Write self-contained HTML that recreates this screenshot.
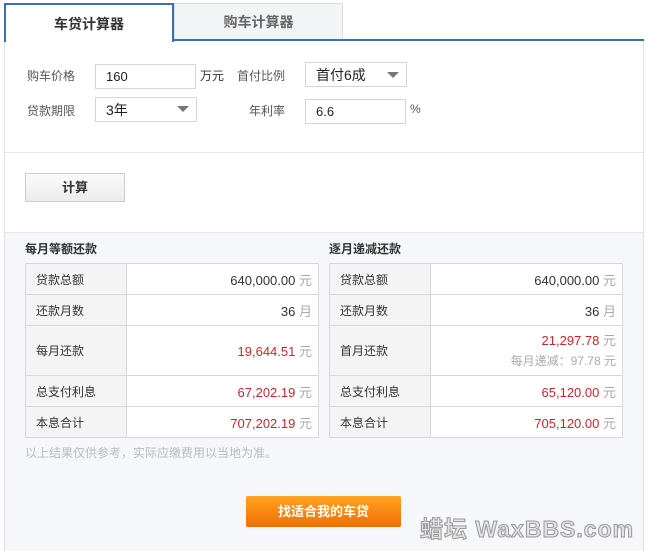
<!DOCTYPE html>
<html><head><meta charset="utf-8"><style>
*{margin:0;padding:0;box-sizing:border-box}
body{width:648px;height:551px;background:#fff;font-family:"Liberation Sans","Noto Sans CJK SC",sans-serif;font-size:12px;color:#333;position:relative;overflow:hidden}
.a{position:absolute}
.inp{position:absolute;border:1px solid #d5d5d5;background:#fff;font-size:13px;color:#222;padding-left:10px;line-height:24px;height:25px}
.tri{position:absolute;width:0;height:0;border-left:6px solid transparent;border-right:6px solid transparent;border-top:6px solid #777}
table{position:absolute;border-collapse:collapse;font-size:12px}
td{border:1px solid #d8d8d8;height:31px}
td.l{background:#f4f4f4;width:101px;padding-left:10px;color:#333}
td.r{background:#fff;text-align:right;padding-right:6px;font-size:13px;color:#333}
.u{color:#aaa}
.red{color:#c4282c}
</style></head><body>
<div class="a" style="left:4px;top:40px;width:640px;height:511px;border-left:1px solid #dde2e8;border-right:1px solid #dde2e8"></div>
<div class="a" style="left:173px;top:39px;width:471px;height:2px;background:#3f6eae"></div>
<div class="a" style="left:4px;top:3px;width:170px;height:39px;background:#fff;border:2px solid #3f6eae;border-bottom:none;text-align:center;line-height:38px;font-size:14px;font-weight:bold;color:#333">车贷计算器</div>
<div class="a" style="left:174px;top:3px;width:169px;height:36px;background:#f2f4f6;border:1px solid #d8dde2;border-bottom:none;text-align:center;line-height:36px;font-size:14px;font-weight:bold;color:#666">购车计算器</div>
<div class="a" style="left:27px;top:67px;color:#555">购车价格</div>
<div class="inp" style="left:95px;top:64px;width:101px">160</div>
<div class="a" style="left:200px;top:67px;color:#333">万元</div>
<div class="a" style="left:237px;top:67px;color:#555">首付比例</div>
<div class="inp" style="left:305px;top:62px;width:102px;font-size:14px">首付6成</div>
<div class="tri" style="left:387px;top:72px"></div>
<div class="a" style="left:27px;top:102px;color:#555">贷款期限</div>
<div class="inp" style="left:95px;top:97px;width:102px;font-size:14px">3年</div>
<div class="tri" style="left:177px;top:106px"></div>
<div class="a" style="left:249px;top:102px;color:#555">年利率</div>
<div class="inp" style="left:305px;top:99px;width:101px">6.6</div>
<div class="a" style="left:410px;top:102px;color:#555">%</div>
<div class="a" style="left:5px;top:152px;width:638px;height:1px;background:#e6e6e6"></div>
<div class="a" style="left:25px;top:173px;width:100px;height:29px;border:1px solid #ccc;background:linear-gradient(#fafafa,#ececec);text-align:center;line-height:27px;font-weight:bold;font-size:13px">计算</div>
<div class="a" style="left:5px;top:232px;width:638px;height:319px;background:#f5f7fa;border-top:1px solid #e6e6e6"></div>
<div class="a" style="left:25px;top:240px;font-weight:bold;font-size:12px">每月等额还款</div>
<div class="a" style="left:329px;top:240px;font-weight:bold;font-size:12px">逐月递减还款</div>
<table style="left:25px;top:263px;width:294px">
<tr><td class="l">贷款总额</td><td class="r">640,000.00 <span class="u">元</span></td></tr>
<tr><td class="l">还款月数</td><td class="r">36 <span class="u">月</span></td></tr>
<tr><td class="l" style="height:50px">每月还款</td><td class="r"><span class="red">19,644.51</span> <span class="u">元</span></td></tr>
<tr><td class="l">总支付利息</td><td class="r"><span class="red">67,202.19</span> <span class="u">元</span></td></tr>
<tr><td class="l">本息合计</td><td class="r"><span class="red">707,202.19</span> <span class="u">元</span></td></tr>
</table>
<table style="left:329px;top:263px;width:294px">
<tr><td class="l">贷款总额</td><td class="r">640,000.00 <span class="u">元</span></td></tr>
<tr><td class="l">还款月数</td><td class="r">36 <span class="u">月</span></td></tr>
<tr><td class="l" style="height:50px">首月还款</td><td class="r" style="line-height:20px"><span class="red">21,297.78</span> <span class="u">元</span><br><span class="u" style="font-size:12px">每月递减：97.78 元</span></td></tr>
<tr><td class="l">总支付利息</td><td class="r"><span class="red">65,120.00</span> <span class="u">元</span></td></tr>
<tr><td class="l">本息合计</td><td class="r"><span class="red">705,120.00</span> <span class="u">元</span></td></tr>
</table>
<div class="a" style="left:25px;top:444px;color:#bbb;font-size:12px">以上结果仅供参考，实际应缴费用以当地为准。</div>
<div class="a" style="left:246px;top:496px;width:155px;height:31px;background:linear-gradient(#ffa321,#f06e00);border-radius:2px;color:#fff;font-weight:bold;text-align:center;line-height:31px;font-size:13px">找适合我的车贷</div>
<div class="a" style="left:420px;top:510px;font-size:23px;font-weight:bold;color:#e4e4e4;-webkit-text-stroke:1px #999;font-family:'Liberation Sans','Noto Sans CJK SC',sans-serif;letter-spacing:1px">蜡坛 WaxBBS.com</div>
</body></html>
